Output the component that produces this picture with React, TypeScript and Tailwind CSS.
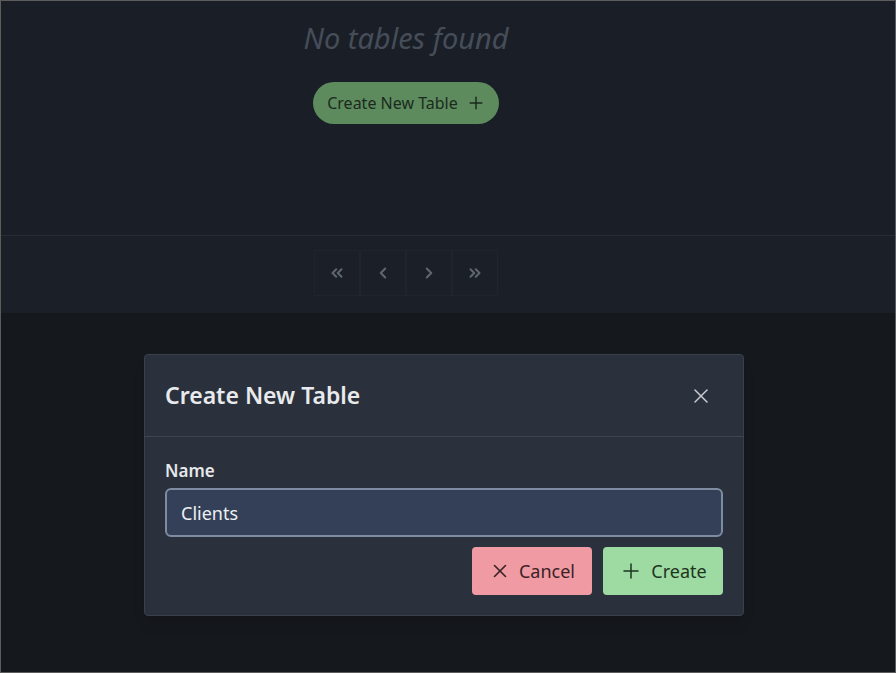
import { ChevronLeft, ChevronRight, ChevronsLeft, ChevronsRight, Plus, X } from 'lucide-react'

const FONT = { fontFamily: '"Noto Sans", "Open Sans", sans-serif' }

function PageButton({ children }: { children: React.ReactNode }) {
  return (
    <button
      type="button"
      className="flex h-[46px] w-[46px] items-center justify-center border border-[#20252d] text-[#5d6671]"
    >
      {children}
    </button>
  )
}

export default function App() {
  return (
    <div
      style={FONT}
      className="relative flex h-[673px] w-[896px] flex-col overflow-hidden border border-[#5c5c5c] bg-[#15181d]"
    >
      {/* page content (dimmed by overlay) */}
      <div className="h-[234px] bg-[#1a1f27]">
        <div className="flex w-[810px] flex-col items-center pt-[19px]">
          <p className="text-[29px] italic leading-9 text-[#464d58]">No tables found</p>
          <button
            type="button"
            className="mt-[26px] flex h-[42px] items-center gap-2 rounded-full bg-[#5d8b5e] pl-[14px] pr-[13px] text-[16px] text-[#1b2a1d]"
          >
            Create New Table
            <Plus className="h-5 w-5" strokeWidth={1.75} />
          </button>
        </div>
      </div>

      <div className="h-[78px] border-t border-[#262b34] bg-[#1a1f28]">
        <div className="flex w-[810px] justify-center pt-[14px]">
          <div className="flex">
            <PageButton><ChevronsLeft className="h-[18px] w-[18px]" strokeWidth={2.75} /></PageButton>
            <PageButton><ChevronLeft className="h-[18px] w-[18px]" strokeWidth={2.75} /></PageButton>
            <PageButton><ChevronRight className="h-[18px] w-[18px]" strokeWidth={2.75} /></PageButton>
            <PageButton><ChevronsRight className="h-[18px] w-[18px]" strokeWidth={2.75} /></PageButton>
          </div>
        </div>
      </div>

      {/* modal */}
      <div className="absolute left-[143px] top-[353px] w-[600px] rounded-[4px] border border-[#3a404b] bg-[#2b313c] shadow-lg">
        <div className="flex h-[82px] items-center justify-between border-b border-[#3e4551] px-5">
          <h2 className="text-[23px] font-semibold text-[#e8eaed]">Create New Table</h2>
          <button type="button" className="mr-[10px] text-[#c9cdd3]">
            <X className="h-6 w-6" strokeWidth={1.5} />
          </button>
        </div>
        <div className="px-5 pb-5 pt-[22px]">
          <label className="block text-[17px] font-semibold leading-6 text-[#e6e8eb]">Name</label>
          <input
            defaultValue="Clients"
            className="mt-[5px] h-[49px] w-full rounded-[6px] border-2 border-[#7d8ca1] bg-[#334058] px-[14px] text-[18px] text-[#eef0f3] outline-none"
            style={FONT}
          />
          <div className="mt-[10px] flex justify-end gap-[11px]">
            <button
              type="button"
              className="flex h-[48px] w-[120px] items-center justify-center gap-2 rounded-[4px] bg-[#f09aa3] text-[18px] text-[#3b2225]"
            >
              <X className="h-[22px] w-[22px]" strokeWidth={1.75} />
              Cancel
            </button>
            <button
              type="button"
              className="flex h-[48px] w-[120px] items-center justify-center gap-2 rounded-[4px] bg-[#9ddba2] text-[18px] text-[#1d3421]"
            >
              <Plus className="h-6 w-6" strokeWidth={1.5} />
              Create
            </button>
          </div>
        </div>
      </div>
    </div>
  )
}
